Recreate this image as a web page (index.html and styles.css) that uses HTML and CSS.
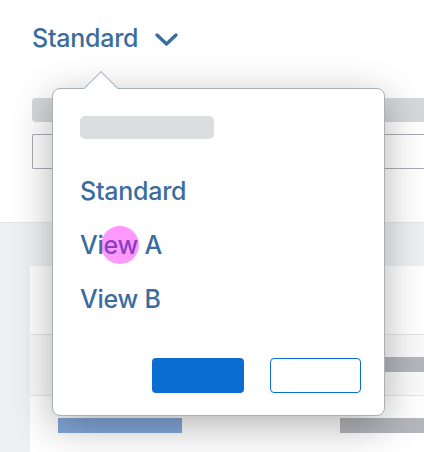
FILE: index.html
```html
<!DOCTYPE html>
<html lang="en">

<head>
    <meta charset="UTF-8">
    <meta name="viewport" content="width=device-width, initial-scale=1.0">
    <title>Variant Management</title>
    <link rel="stylesheet" href="styles.css">
</head>

<body>
    <div class="page">
        <header class="header">
            <div class="variant">
                <span class="variant-title">Standard</span>
                <svg class="chevron" width="25" height="15" viewBox="0 0 25 15">
                    <path d="M3 3 L12.5 12 L22 3" fill="none" stroke="#3a6d9e" stroke-width="3.4" stroke-linecap="round" stroke-linejoin="round" />
                </svg>
            </div>
            <div class="skel-bar"></div>
            <div class="field"></div>
        </header>

        <main class="content">
            <section class="card">
                <div class="row row-head"></div>
                <div class="row row-sub">
                    <span class="skel skel-gray"></span>
                </div>
                <div class="row row-item">
                    <span class="skel skel-blue"></span>
                    <span class="skel skel-gray"></span>
                </div>
            </section>
        </main>

        <div class="popover">
            <div class="popover-title"></div>
            <ul class="view-list">
                <li>Standard</li>
                <li>View A</li>
                <li>View B</li>
            </ul>
            <div class="popover-footer">
                <button class="btn btn-primary"></button>
                <button class="btn btn-ghost"></button>
            </div>
        </div>

        <div class="touch"></div>
    </div>
</body>

</html>
```

FILE: styles.css
```css
body {
    margin: 0;
    font-family: Inter, "Liberation Sans", sans-serif;
    color: #3a6d9e;
    overflow: hidden;
}

.page {
    position: relative;
    width: 424px;
    height: 452px;
    overflow: hidden;
    background-color: #eef0f2;
}

.header {
    background-color: #ffffff;
    padding: 22px 0 53px 32px;
    border-bottom: 1px solid #e3e5e7;
}

.variant {
    display: flex;
    align-items: center;
    gap: 16px;
    height: 32px;
}

.variant-title {
    font-size: 25px;
    font-weight: 500;
    line-height: 32px;
    letter-spacing: -0.25px;
}

.chevron {
    margin-top: 2px;
}

.skel-bar {
    margin-top: 44px;
    height: 24px;
    background-color: #d6d7d9;
    border-radius: 4px 0 0 4px;
}

.field {
    margin-top: 12px;
    height: 35px;
    box-sizing: border-box;
    border: 1px solid #a9adb3;
    border-right: none;
    border-radius: 2px 0 0 2px;
}

.content {
    padding: 43px 0 0 30px;
}

.card {
    background-color: #ffffff;
    height: 200px;
}

.row {
    box-sizing: border-box;
    display: flex;
    align-items: flex-start;
    justify-content: space-between;
    border-bottom: 1px solid #e5e5e5;
}

.row-head {
    height: 69px;
}

.row-sub {
    height: 61px;
    background-color: #fafafa;
    justify-content: flex-end;
    padding-top: 22px;
}

.row-item {
    height: 60px;
    padding: 22px 0 0 28px;
    border-bottom: none;
}

.skel {
    display: block;
    height: 15px;
}

.skel-gray {
    width: 84px;
    background-color: #b3b6bb;
}

.skel-blue {
    width: 124px;
    background-color: #84a8da;
}

.popover {
    position: absolute;
    left: 52px;
    top: 88px;
    width: 333px;
    height: 328px;
    box-sizing: border-box;
    display: flex;
    flex-direction: column;
    padding: 27px 23px 22px 27px;
    background-color: #ffffff;
    border: 1px solid #a8b0b8;
    border-radius: 8px;
    box-shadow: 0 10px 40px rgba(0, 0, 0, 0.3);
}

.popover::before {
    content: "";
    position: absolute;
    left: 36px;
    top: -13px;
    width: 24px;
    height: 24px;
    box-sizing: border-box;
    background-color: #ffffff;
    border-top: 1px solid #a8b0b8;
    border-left: 1px solid #a8b0b8;
    transform: rotate(45deg);
}

.popover-title {
    position: relative;
    width: 134px;
    height: 23px;
    background-color: #dcdde0;
    border-radius: 5px;
}

.view-list {
    list-style: none;
    margin: 25px 0 0 0;
    padding: 0;
}

.view-list li {
    font-size: 25px;
    font-weight: 500;
    line-height: 54px;
    letter-spacing: -0.25px;
}

.popover-footer {
    margin-top: auto;
    display: flex;
    justify-content: flex-end;
    gap: 26px;
}

.btn {
    width: 92px;
    height: 35px;
    border-radius: 4px;
    padding: 0;
    cursor: pointer;
}

.btn-primary {
    background-color: #0a6ed1;
    border: none;
}

.btn-ghost {
    width: 91px;
    background-color: #ffffff;
    border: 1px solid #0a6ed1;
}

.touch {
    position: absolute;
    left: 101px;
    top: 226px;
    width: 38px;
    height: 38px;
    border-radius: 50%;
    background-color: rgba(255, 0, 255, 0.4);
}
```
